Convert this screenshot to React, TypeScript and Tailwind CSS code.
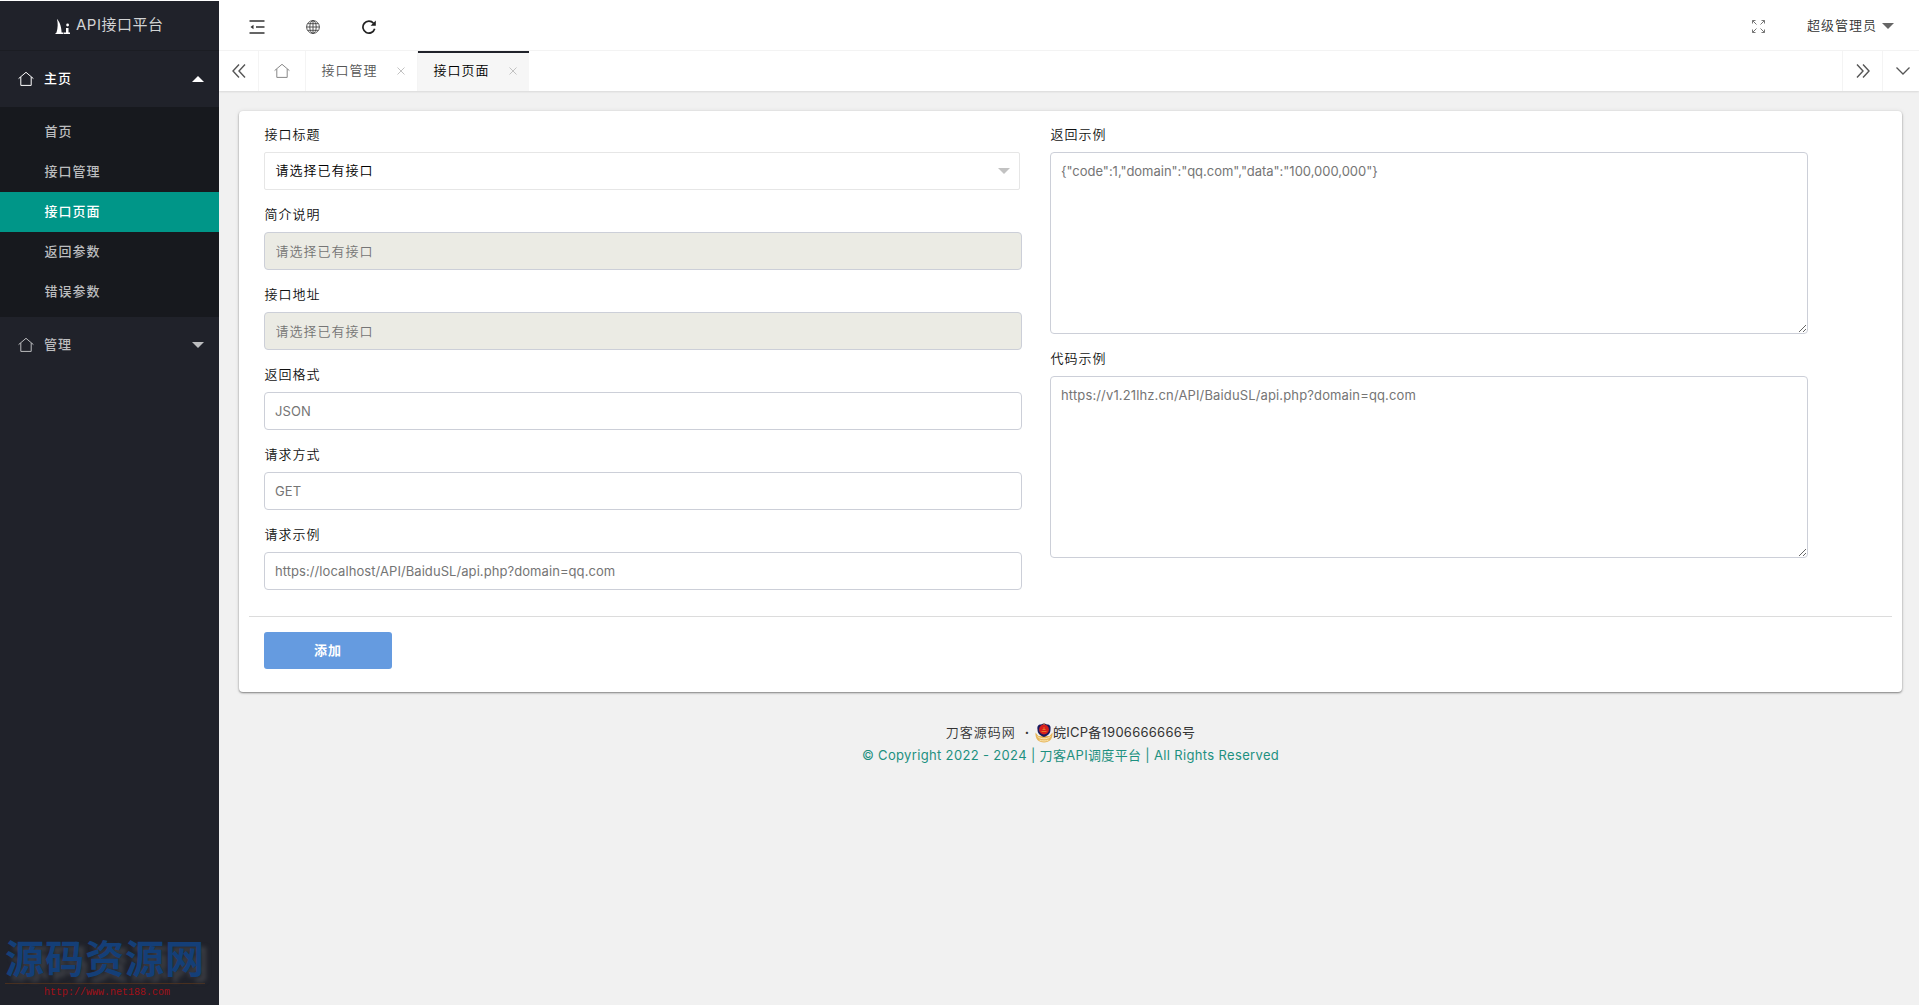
import type { ReactNode } from "react";

const menuItems = [
  { label: "首页", active: false },
  { label: "接口管理", active: false },
  { label: "接口页面", active: true },
  { label: "返回参数", active: false },
  { label: "错误参数", active: false },
];

const fields = [
  { label: "简介说明", placeholder: "请选择已有接口", disabled: true },
  { label: "接口地址", placeholder: "请选择已有接口", disabled: true },
  { label: "返回格式", placeholder: "JSON", disabled: false },
  { label: "请求方式", placeholder: "GET", disabled: false },
  { label: "请求示例", placeholder: "https://localhost/API/BaiduSL/api.php?domain=qq.com", disabled: false },
];

const examples = [
  { label: "返回示例", placeholder: '{"code":1,"domain":"qq.com","data":"100,000,000"}', spacing: "tracking-[-0.02px]" },
  { label: "代码示例", placeholder: "https://v1.21lhz.cn/API/BaiduSL/api.php?domain=qq.com", spacing: "tracking-[0.14px]" },
];

function HomeIcon({ className }: { className?: string }) {
  return (
    <svg viewBox="0 0 16 16" width="16" height="16" fill="none" stroke="currentColor" className={className}>
      <path d="M.6 7.6 8 1.3l7.4 6.3M2.8 6v8.4h10.4V6" />
    </svg>
  );
}

function Caret({ up, className }: { up?: boolean; className?: string }) {
  return (
    <svg viewBox="0 0 12 6" width="12" height="6" fill="currentColor" className={className}>
      <path d={up ? "M0 6 6 0l6 6z" : "M0 0h12L6 6z"} />
    </svg>
  );
}

function DoubleChevron({ right }: { right?: boolean }) {
  return (
    <svg viewBox="0 0 14 14" width="14" height="14" fill="none" stroke="#555" strokeWidth="1.4">
      <path d={right ? "M1 .5 7 7l-6 6.5M7 .5 13 7l-6 6.5" : "M7 .5 1 7l6 6.5M13 .5 7 7l6 6.5"} />
    </svg>
  );
}

function CloseIcon() {
  return (
    <svg viewBox="0 0 8 8" width="8" height="8" stroke="#c2c2c2" fill="none">
      <path d="m.5.5 7 7m0-7-7 7" />
    </svg>
  );
}

function Label({ children }: { children: ReactNode }) {
  return <div className="h-[34px] pl-[0.5px] text-[13px] leading-8 font-[350] tracking-[1px] text-[#111]">{children}</div>;
}

function Sidebar() {
  return (
    <aside className="flex w-[219px] shrink-0 flex-col bg-[#20222a] text-[#bcbdbf]">
      <div className="flex h-[50px] items-center border-b border-[#1b1d23] pl-[55px] text-[#d2d3d4]">
        <svg viewBox="0 0 16 16" width="16" height="16" fill="#fff" className="mt-0.5">
          <path d="M2 0c2 2 4.300 6 4.600 13.500H8V15H0l1.500-1.500C3 9 3 4 2 0z" />
          <path d="M8.500 15V13.500H11V9h2.500v4.500H15V15z" />
          <circle cx="12.600" cy="6" r="1.400" />
        </svg>
        <span className="ml-[5px] text-[15px] tracking-[0.5px] whitespace-nowrap">API接口平台</span>
      </div>
      <div className="flex h-14 items-center pl-[18px] text-white">
        <HomeIcon />
        <span className="ml-2.5 flex-1 text-[13px] font-medium tracking-[1px]">主页</span>
        <Caret up className="mr-[15px]" />
      </div>
      <nav className="bg-[#17191e] py-[5px]">
        {menuItems.map((item) => (
          <div
            key={item.label}
            className={`h-10 pl-[44.500px] text-[13px] leading-[39px] font-medium tracking-[1px] ${item.active ? "bg-[#009688] text-white" : ""}`}
          >
            {item.label}
          </div>
        ))}
      </nav>
      <div className="flex h-14 items-center pl-[18px]">
        <HomeIcon />
        <span className="ml-2.5 flex-1 text-[13px] font-medium tracking-[1px]">管理</span>
        <Caret className="mr-[15px]" />
      </div>
      <div className="mt-auto ml-[5px] h-[68px] w-[200px]">
        <div className="h-[47px] border-b border-[#49301f] text-[39px] leading-[44px] font-bold tracking-[1px] whitespace-nowrap text-[#143f78] [text-shadow:5px_5px_4px_#3c3e44]">
          源码资源网
        </div>
        <div className="pl-[39px] font-['Liberation_Mono',monospace] text-[10px] leading-[18px] text-[#a01018]">
          http://www.net188.com
        </div>
      </div>
    </aside>
  );
}

function Header() {
  return (
    <header className="flex h-[50px] items-center border-b border-[#f4f4f4] bg-white pt-0.5 pl-[30px] text-[#333]">
      <svg viewBox="0 0 16 14" width="16" height="14" stroke="#333" strokeWidth="1.500" fill="none">
        <path d="M.5 1h15M7 7h8.500M.5 13h15" />
        <path d="M4.500 4.800v4.400L1.500 7z" fill="#333" stroke="none" />
      </svg>
      <svg viewBox="0 0 14 14" width="14" height="14" stroke="#444" strokeWidth=".9" fill="none" className="ml-[41px]">
        <circle cx="7" cy="7" r="6.400" />
        <ellipse cx="7" cy="7" rx="3.200" ry="6.400" />
        <path d="M7 .6v12.800M.6 7h12.800M1.700 3.700h10.600M1.700 10.300h10.600" />
      </svg>
      <svg viewBox="0 0 14 14" width="14" height="14" stroke="#222" strokeWidth="1.700" fill="none" className="ml-[42px]">
        <path d="M11.500 3.200A6 6 0 1 0 12.700 8.800" />
        <path d="M13.800.5v5.200H8.600z" fill="#222" stroke="none" />
      </svg>
      <svg viewBox="0 0 13 13" width="13" height="13" stroke="#777" fill="none" className="mr-[42px] ml-auto">
        <path d="M.5 3.500v-3h3M9.500.5h3v3M12.500 9.500v3h-3M3.500 12.500h-3v-3M.5.5l4 4M12.500.5l-4 4M12.500 12.500l-4-4M.5 12.500l4-4" />
      </svg>
      <span className="pb-px text-[13px] font-[350] tracking-[1px]">超级管理员</span>
      <Caret className="mr-[25px] mb-px ml-[5px] text-[#666]" />
    </header>
  );
}

function TabBar() {
  return (
    <div className="z-10 flex h-10 bg-white text-[13px] font-[350] text-[#555] shadow-[0_1px_2px_rgba(0,0,0,.1)]">
      <div className="flex w-10 items-center justify-center border-r border-[#f4f4f4]">
        <DoubleChevron />
      </div>
      <div className="flex w-[47px] items-center justify-center border-r border-[#f4f4f4]">
        <HomeIcon className="text-[#888]" />
      </div>
      <div className="flex w-[112px] items-center justify-between border-r border-[#f4f4f4] pr-[12px] pl-[15.500px]">
        <span className="tracking-[1px]">接口管理</span>
        <CloseIcon />
      </div>
      <div className="flex w-[111px] items-center justify-between border-t-2 border-[#20222a] bg-[#f6f6f6] pr-[12px] pb-0.5 pl-[15.500px] text-black">
        <span className="tracking-[1px]">接口页面</span>
        <CloseIcon />
      </div>
      <div className="ml-auto flex w-10 items-center justify-center border-l border-[#f4f4f4]">
        <DoubleChevron right />
      </div>
      <div className="flex w-[37px] items-center border-l border-[#f4f4f4] pl-[13px]">
        <svg viewBox="0 0 14 8" width="14" height="8" fill="none" stroke="#555" strokeWidth="1.300">
          <path d="m.5.5 6.500 6.500L13.500.5" />
        </svg>
      </div>
    </div>
  );
}

function PoliceBadge() {
  return (
    <svg viewBox="0 0 18 20" width="18" height="20">
      <path d="M.5 9.500C0 16 3.500 19.500 9 19.500s9-3.500 8.500-10L14.500 13h-11z" fill="#e8b75c" />
      <path d="M9 .3 12 1.500c3 0 4 2 3.500 5 0 4-2.500 6-6.500 7.500C5 12.500 2.500 10.500 2.500 6.500 2 3.500 3 1.500 6 1.500z" fill="#1a1a5e" />
      <circle cx="9" cy="6.500" r="4.900" fill="#d8201c" />
      <path d="M6.500 8.500h5M7.500 6.500h3M9 4.200v2" stroke="#f08a2c" strokeWidth=".8" />
      <path d="M9 .3v1.500" stroke="#e8b75c" />
      <path d="M2.500 13.500c3 3 10 3 13 0M4.500 17c2.500 1.300 6.500 1.300 9 0" stroke="#fbe7b5" fill="none" />
    </svg>
  );
}

function InterfaceForm() {
  return (
    <section className="ml-5 h-[581px] w-[1663px] rounded bg-white px-2.5 pt-[7px] shadow-[0_1px_2px_rgba(0,0,0,.45),0_0_5px_rgba(0,0,0,.08)]">
      <div className="flex h-[499px] gap-7 border-b border-[#dcdcdc] pl-[15px]">
        <div className="flex w-[758px] flex-col gap-2">
          <div>
            <Label>接口标题</Label>
            <div className="flex h-[38px] w-[756px] items-center justify-between rounded-[2px] border border-[#e6e6e6] pr-[9px] pl-[10.500px] text-[13px] font-[350] tracking-[1px] text-black">
              请选择已有接口
              <Caret className="text-[#c2c2c2]" />
            </div>
          </div>
          {fields.map((field) => (
            <div key={field.label}>
              <Label>{field.label}</Label>
              <input
                placeholder={field.placeholder}
                disabled={field.disabled}
                className={`block h-[38px] w-full rounded-[4px] border border-[#cccfd8] text-[13px] placeholder:text-[#757575] ${field.disabled ? "bg-[#ebebe4] px-[10.500px] pb-px font-[350] tracking-[1px]" : "px-2.5 tracking-[0.07px]"}`}
              />
            </div>
          ))}
        </div>
        <div className="flex w-[758px] flex-col gap-2">
          {examples.map((example) => (
            <div key={example.label}>
              <Label>{example.label}</Label>
              <textarea
                placeholder={example.placeholder}
                className={`block h-[182px] w-full resize rounded-[4px] border border-[#cccfd8] px-2.5 py-2 text-[13px] leading-5 placeholder:text-[#757575] ${example.spacing}`}
              />
            </div>
          ))}
        </div>
      </div>
      <button className="mt-[15px] ml-[15px] h-[37px] w-32 rounded-[3px] bg-[#659be0] text-[13px] font-bold tracking-[1px] text-white">
        添加
      </button>
    </section>
  );
}

export default function App() {
  return (
    <div className="h-[1005px] w-[1919px] overflow-hidden bg-white pt-px font-['Inter','Noto_Sans_CJK_SC',sans-serif]">
      <div className="flex h-full">
        <Sidebar />
        <main className="flex flex-1 flex-col bg-[#f1f1f1]">
          <Header />
          <TabBar />
          <div className="pt-5">
            <InterfaceForm />
            <footer className="mr-[17px] ml-5 flex flex-col items-center pt-[29px] text-[13px] leading-[23px] text-[#333]">
              <div className="flex items-center">
                <span className="font-[350] tracking-[1px]">刀客源码网</span>
                <span className="mr-1.5 ml-[9px] font-bold">·</span>
                <PoliceBadge />
                <span className="tracking-[0.25px]">皖ICP备1906666666号</span>
              </div>
              <div className="tracking-[0.34px] text-[#1d9080]">© Copyright 2022 - 2024 | 刀客API调度平台 | All Rights Reserved</div>
            </footer>
          </div>
        </main>
      </div>
    </div>
  );
}
